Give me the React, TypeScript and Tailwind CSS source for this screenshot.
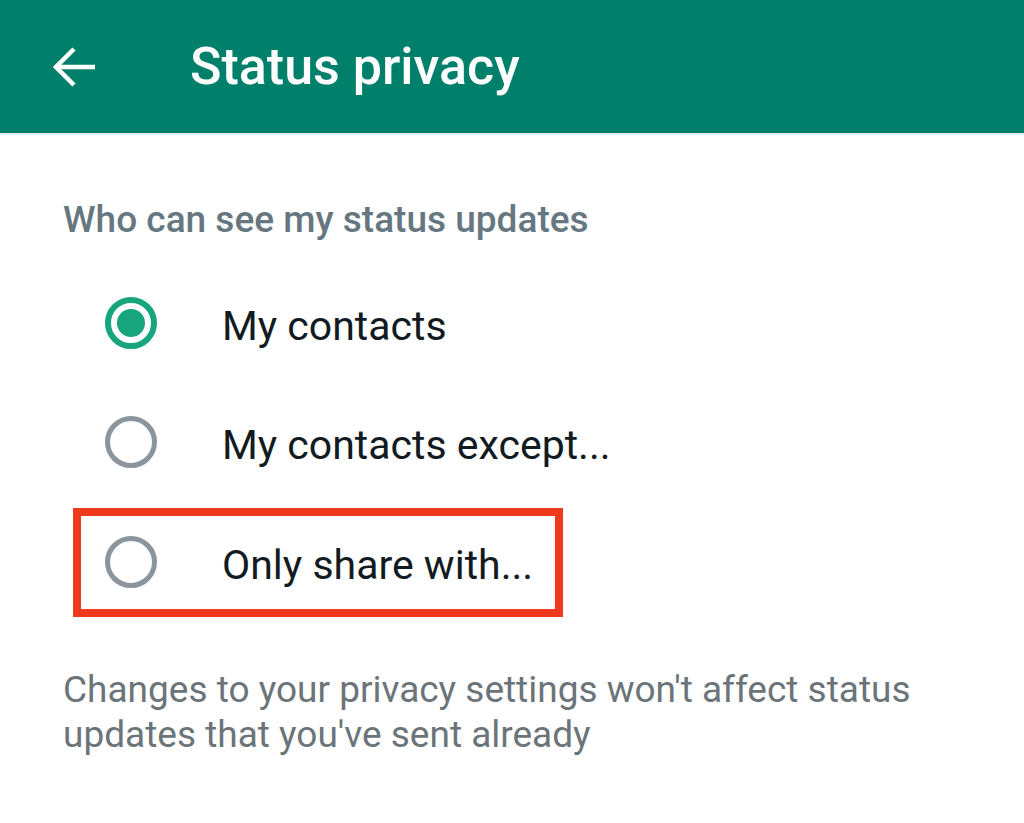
import { ReactNode } from 'react';

const font = { fontFamily: 'Roboto, "Noto Sans", sans-serif' };

function Radio({ checked }: { checked?: boolean }) {
  if (checked) {
    return (
      <div className="w-[52px] h-[52px] rounded-full border-[6px] border-[#17a57e] flex items-center justify-center shrink-0">
        <div className="w-[28px] h-[28px] rounded-full bg-[#17a57e]" />
      </div>
    );
  }
  return <div className="w-[52px] h-[52px] rounded-full border-[5px] border-[#8a959d] shrink-0" />;
}

function Option({ label, checked }: { label: string; checked?: boolean }) {
  return (
    <div className="flex items-center gap-[65px]">
      <Radio checked={checked} />
      <span className="mt-[6px] text-[41px] leading-[48px] text-[#111b21]">{label}</span>
    </div>
  );
}

function Row({ children, tall }: { children: ReactNode; tall?: boolean }) {
  return <div className={tall ? 'h-[120px] flex items-center' : 'h-[118px] flex items-center'}>{children}</div>;
}

export default function App() {
  return (
    <div className="w-[1024px] h-[823px] bg-white overflow-hidden" style={font}>
      <header className="h-[135px] bg-[#00806a] flex items-center border-b-2 border-[#e3f3ef]">
        <div className="w-[190px] flex pl-[53px]">
          <svg width="42" height="40" viewBox="0 0 42 40" fill="none" stroke="white" strokeWidth="4.5" strokeLinecap="butt">
            <path d="M3 20H42" />
            <path d="M21 2L3 20L21 38" strokeLinejoin="miter" />
          </svg>
        </div>
        <h1 className="text-[52px] leading-[62px] font-medium text-white">Status privacy</h1>
      </header>

      <main className="pl-[63px]">
        <p className="mt-[63px] text-[37px] leading-[44px] font-medium text-[#667781]">Who can see my status updates</p>

        <div className="mt-[22px]">
          <Row>
            <div className="pl-[42px]">
              <Option label="My contacts" checked />
            </div>
          </Row>
          <Row tall>
            <div className="pl-[42px]">
              <Option label="My contacts except..." />
            </div>
          </Row>
          <Row tall>
            <div className="ml-[10px] w-[490px] h-[109px] border-8 border-[#ee3a1c] flex items-center pl-[24px]">
              <Option label="Only share with..." />
            </div>
          </Row>
        </div>

        <p className="mt-[45px] w-[900px] text-[37px] leading-[45px] text-[#6b7479]">
          Changes to your privacy settings won't affect status updates that you've sent already
        </p>
      </main>
    </div>
  );
}
